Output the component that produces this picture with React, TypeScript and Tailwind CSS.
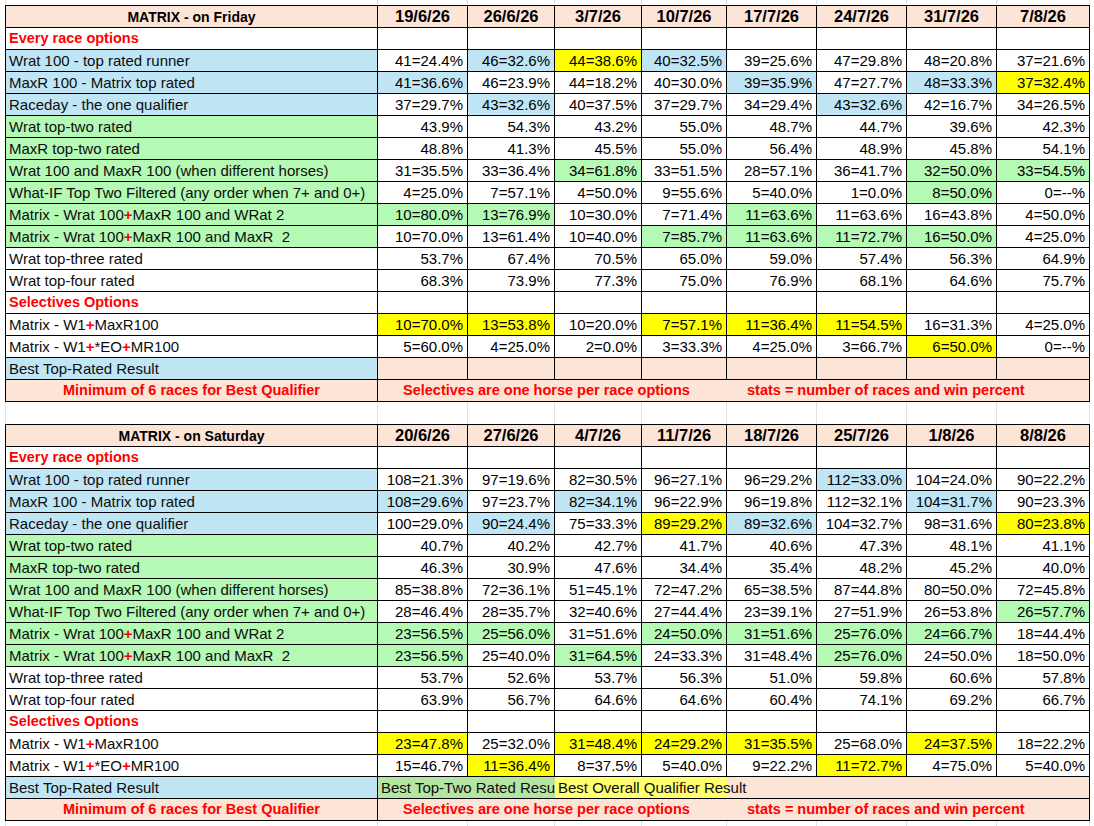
import React from "react";

const COLS = "grid-cols-[372px_90px_87px_87px_85px_90px_90px_90px_93px]";
const BG: Record<string, string> = {
  b: "bg-[#c0e6f5]",
  y: "bg-[#ffff00]",
  g: "bg-[#b4fab4]",
  w: "bg-white",
};

const Plus = () => <span className="font-bold text-[#ff0000]">+</span>;

type Row =
  | { kind: "section"; text: string }
  | { kind: "data"; label: React.ReactNode; bg: string; cells: string };

const M1 = (
  <>
    Matrix - Wrat 100<Plus />MaxR 100 and WRat 2
  </>
);
const M2 = (
  <>
    Matrix - Wrat 100<Plus />MaxR 100 and MaxR  2
  </>
);
const S1 = (
  <>
    Matrix - W1<Plus />MaxR100
  </>
);
const S2 = (
  <>
    Matrix - W1<Plus />*EO<Plus />MR100
  </>
);

const friRows: Row[] = [
  { kind: "section", text: "Every race options" },
  { kind: "data", label: "Wrat 100 - top rated runner", bg: "b", cells: "41=24.4% 46=32.6%:b 44=38.6%:y 40=32.5%:b 39=25.6% 47=29.8% 48=20.8% 37=21.6%" },
  { kind: "data", label: "MaxR 100 - Matrix top rated", bg: "b", cells: "41=36.6%:b 46=23.9% 44=18.2% 40=30.0% 39=35.9%:b 47=27.7% 48=33.3%:b 37=32.4%:y" },
  { kind: "data", label: "Raceday - the one qualifier", bg: "b", cells: "37=29.7% 43=32.6%:b 40=37.5% 37=29.7% 34=29.4% 43=32.6%:b 42=16.7% 34=26.5%" },
  { kind: "data", label: "Wrat top-two rated", bg: "g", cells: "43.9% 54.3% 43.2% 55.0% 48.7% 44.7% 39.6% 42.3%" },
  { kind: "data", label: "MaxR top-two rated", bg: "g", cells: "48.8% 41.3% 45.5% 55.0% 56.4% 48.9% 45.8% 54.1%" },
  { kind: "data", label: "Wrat 100 and MaxR 100 (when different horses)", bg: "g", cells: "31=35.5% 33=36.4% 34=61.8%:g 33=51.5% 28=57.1% 36=41.7% 32=50.0%:g 33=54.5%:g" },
  { kind: "data", label: "What-IF Top Two Filtered (any order when 7+ and 0+)", bg: "g", cells: "4=25.0% 7=57.1% 4=50.0% 9=55.6% 5=40.0% 1=0.0% 8=50.0%:g 0=--%" },
  { kind: "data", label: M1, bg: "g", cells: "10=80.0%:g 13=76.9%:g 10=30.0% 7=71.4% 11=63.6%:g 11=63.6% 16=43.8% 4=50.0%" },
  { kind: "data", label: M2, bg: "g", cells: "10=70.0% 13=61.4% 10=40.0% 7=85.7%:g 11=63.6%:g 11=72.7%:g 16=50.0%:g 4=25.0%" },
  { kind: "data", label: "Wrat top-three rated", bg: "w", cells: "53.7% 67.4% 70.5% 65.0% 59.0% 57.4% 56.3% 64.9%" },
  { kind: "data", label: "Wrat top-four rated", bg: "w", cells: "68.3% 73.9% 77.3% 75.0% 76.9% 68.1% 64.6% 75.7%" },
  { kind: "section", text: "Selectives Options" },
  { kind: "data", label: S1, bg: "w", cells: "10=70.0%:y 13=53.8%:y 10=20.0% 7=57.1%:y 11=36.4%:y 11=54.5%:y 16=31.3% 4=25.0%" },
  { kind: "data", label: S2, bg: "w", cells: "5=60.0% 4=25.0% 2=0.0% 3=33.3% 4=25.0% 3=66.7% 6=50.0%:y 0=--%" },
];

const satRows: Row[] = [
  { kind: "section", text: "Every race options" },
  { kind: "data", label: "Wrat 100 - top rated runner", bg: "b", cells: "108=21.3% 97=19.6% 82=30.5% 96=27.1% 96=29.2% 112=33.0%:b 104=24.0% 90=22.2%" },
  { kind: "data", label: "MaxR 100 - Matrix top rated", bg: "b", cells: "108=29.6%:b 97=23.7% 82=34.1%:b 96=22.9% 96=19.8% 112=32.1% 104=31.7%:b 90=23.3%" },
  { kind: "data", label: "Raceday - the one qualifier", bg: "b", cells: "100=29.0% 90=24.4%:b 75=33.3% 89=29.2%:y 89=32.6%:b 104=32.7% 98=31.6% 80=23.8%:y" },
  { kind: "data", label: "Wrat top-two rated", bg: "g", cells: "40.7% 40.2% 42.7% 41.7% 40.6% 47.3% 48.1% 41.1%" },
  { kind: "data", label: "MaxR top-two rated", bg: "g", cells: "46.3% 30.9% 47.6% 34.4% 35.4% 48.2% 45.2% 40.0%" },
  { kind: "data", label: "Wrat 100 and MaxR 100 (when different horses)", bg: "g", cells: "85=38.8% 72=36.1% 51=45.1% 72=47.2% 65=38.5% 87=44.8% 80=50.0% 72=45.8%" },
  { kind: "data", label: "What-IF Top Two Filtered (any order when 7+ and 0+)", bg: "g", cells: "28=46.4% 28=35.7% 32=40.6% 27=44.4% 23=39.1% 27=51.9% 26=53.8% 26=57.7%:g" },
  { kind: "data", label: M1, bg: "g", cells: "23=56.5%:g 25=56.0%:g 31=51.6% 24=50.0%:g 31=51.6%:g 25=76.0%:g 24=66.7%:g 18=44.4%" },
  { kind: "data", label: M2, bg: "g", cells: "23=56.5%:g 25=40.0% 31=64.5%:g 24=33.3% 31=48.4% 25=76.0%:g 24=50.0% 18=50.0%" },
  { kind: "data", label: "Wrat top-three rated", bg: "w", cells: "53.7% 52.6% 53.7% 56.3% 51.0% 59.8% 60.6% 57.8%" },
  { kind: "data", label: "Wrat top-four rated", bg: "w", cells: "63.9% 56.7% 64.6% 64.6% 60.4% 74.1% 69.2% 66.7%" },
  { kind: "section", text: "Selectives Options" },
  { kind: "data", label: S1, bg: "w", cells: "23=47.8%:y 25=32.0% 31=48.4%:y 24=29.2%:y 31=35.5%:y 25=68.0% 24=37.5%:y 18=22.2%" },
  { kind: "data", label: S2, bg: "w", cells: "15=46.7% 11=36.4%:y 8=37.5% 5=40.0% 9=22.2% 11=72.7%:y 4=75.0% 5=40.0%" },
];

const cellBase = "h-[22px] border-r border-b border-black flex items-center";

function GridStrip({ h }: { h: string }) {
  return (
    <div className={`grid ${COLS} ${h} ml-[5px] w-max border-l border-[#e1e1e1]`}>
      {Array.from({ length: 9 }).map((_, i) => (
        <div key={i} className="border-r border-[#e1e1e1]" />
      ))}
    </div>
  );
}

function Table({
  title,
  dates,
  rows,
  variant,
}: {
  title: string;
  dates: string[];
  rows: Row[];
  variant: "fri" | "sat";
}) {
  return (
    <div className={`grid ${COLS} ml-[5px] w-max border-l border-t border-black`}>
      <div className={`${cellBase} justify-center bg-[#fce4d6] text-[14px] font-bold text-black`}>{title}</div>
      {dates.map((d) => (
        <div key={d} className={`${cellBase} justify-center bg-[#fce4d6] text-[16.5px] font-bold text-black`}>
          {d}
        </div>
      ))}
      {rows.map((r, ri) =>
        r.kind === "section" ? (
          <React.Fragment key={ri}>
            <div className={`${cellBase} bg-white pl-[3px] text-[14.5px] font-bold text-[#ff0000]`}>{r.text}</div>
            {dates.map((d) => (
              <div key={d} className={`${cellBase} bg-white`} />
            ))}
          </React.Fragment>
        ) : (
          <React.Fragment key={ri}>
            <div className={`${cellBase} ${BG[r.bg]} whitespace-pre pl-[3px] text-[15px] text-[#0d0d0d]`}>{r.label}</div>
            {r.cells.split(" ").map((c, ci) => {
              const [v, col] = c.split(":");
              return (
                <div key={ci} className={`${cellBase} ${BG[col || "w"]} justify-end pr-[4px] text-[15px] text-black`}>
                  {v}
                </div>
              );
            })}
          </React.Fragment>
        )
      )}
      {/* Best row */}
      <div className={`${cellBase} bg-[#c0e6f5] pl-[3px] text-[15px] text-[#0d0d0d]`}>Best Top-Rated Result</div>
      {variant === "fri" ? (
        dates.map((d) => <div key={d} className={`${cellBase} bg-[#fce4d6]`} />)
      ) : (
        <>
          <div className={`h-[22px] border-b border-black col-span-2 flex items-center overflow-hidden whitespace-nowrap bg-[#b4e5a2] pl-[3px] text-[15px] text-[#0d0d0d]`}>
            Best Top-Two Rated Result
          </div>
          <div className={`relative z-10 h-[22px] border-b border-black col-span-2 flex items-center whitespace-nowrap bg-[#ffff70] pl-[3px] text-[15px] text-[#0d0d0d]`}>
            Best Overall Qualifier Result
          </div>
          <div className={`${cellBase} col-span-4 bg-[#fce4d6]`} />
        </>
      )}
      {/* Footer */}
      <div className={`${cellBase} justify-center bg-[#fce4d6] text-[14.5px] font-bold text-[#ff0000]`}>
        Minimum of 6 races for Best Qualifier
      </div>
      <div className={`${cellBase} col-span-8 bg-[#fce4d6] text-[14.5px] font-bold text-[#ff0000] whitespace-nowrap`}>
        <span className="w-[369px] shrink-0 pl-[25px]">Selectives are one horse per race options</span>
        <span>stats = number of races and win percent</span>
      </div>
    </div>
  );
}

export default function App() {
  return (
    <div className="min-h-[826px] w-[1094px] overflow-hidden bg-white font-['Liberation_Sans',Arial,sans-serif] leading-none">
      <GridStrip h="h-[5px]" />
      <Table
        title="MATRIX - on Friday"
        dates={["19/6/26", "26/6/26", "3/7/26", "10/7/26", "17/7/26", "24/7/26", "31/7/26", "7/8/26"]}
        rows={friRows}
        variant="fri"
      />
      <GridStrip h="h-[22px]" />
      <Table
        title="MATRIX - on Saturday"
        dates={["20/6/26", "27/6/26", "4/7/26", "11/7/26", "18/7/26", "25/7/26", "1/8/26", "8/8/26"]}
        rows={satRows}
        variant="sat"
      />
      <GridStrip h="h-[5px]" />
    </div>
  );
}
